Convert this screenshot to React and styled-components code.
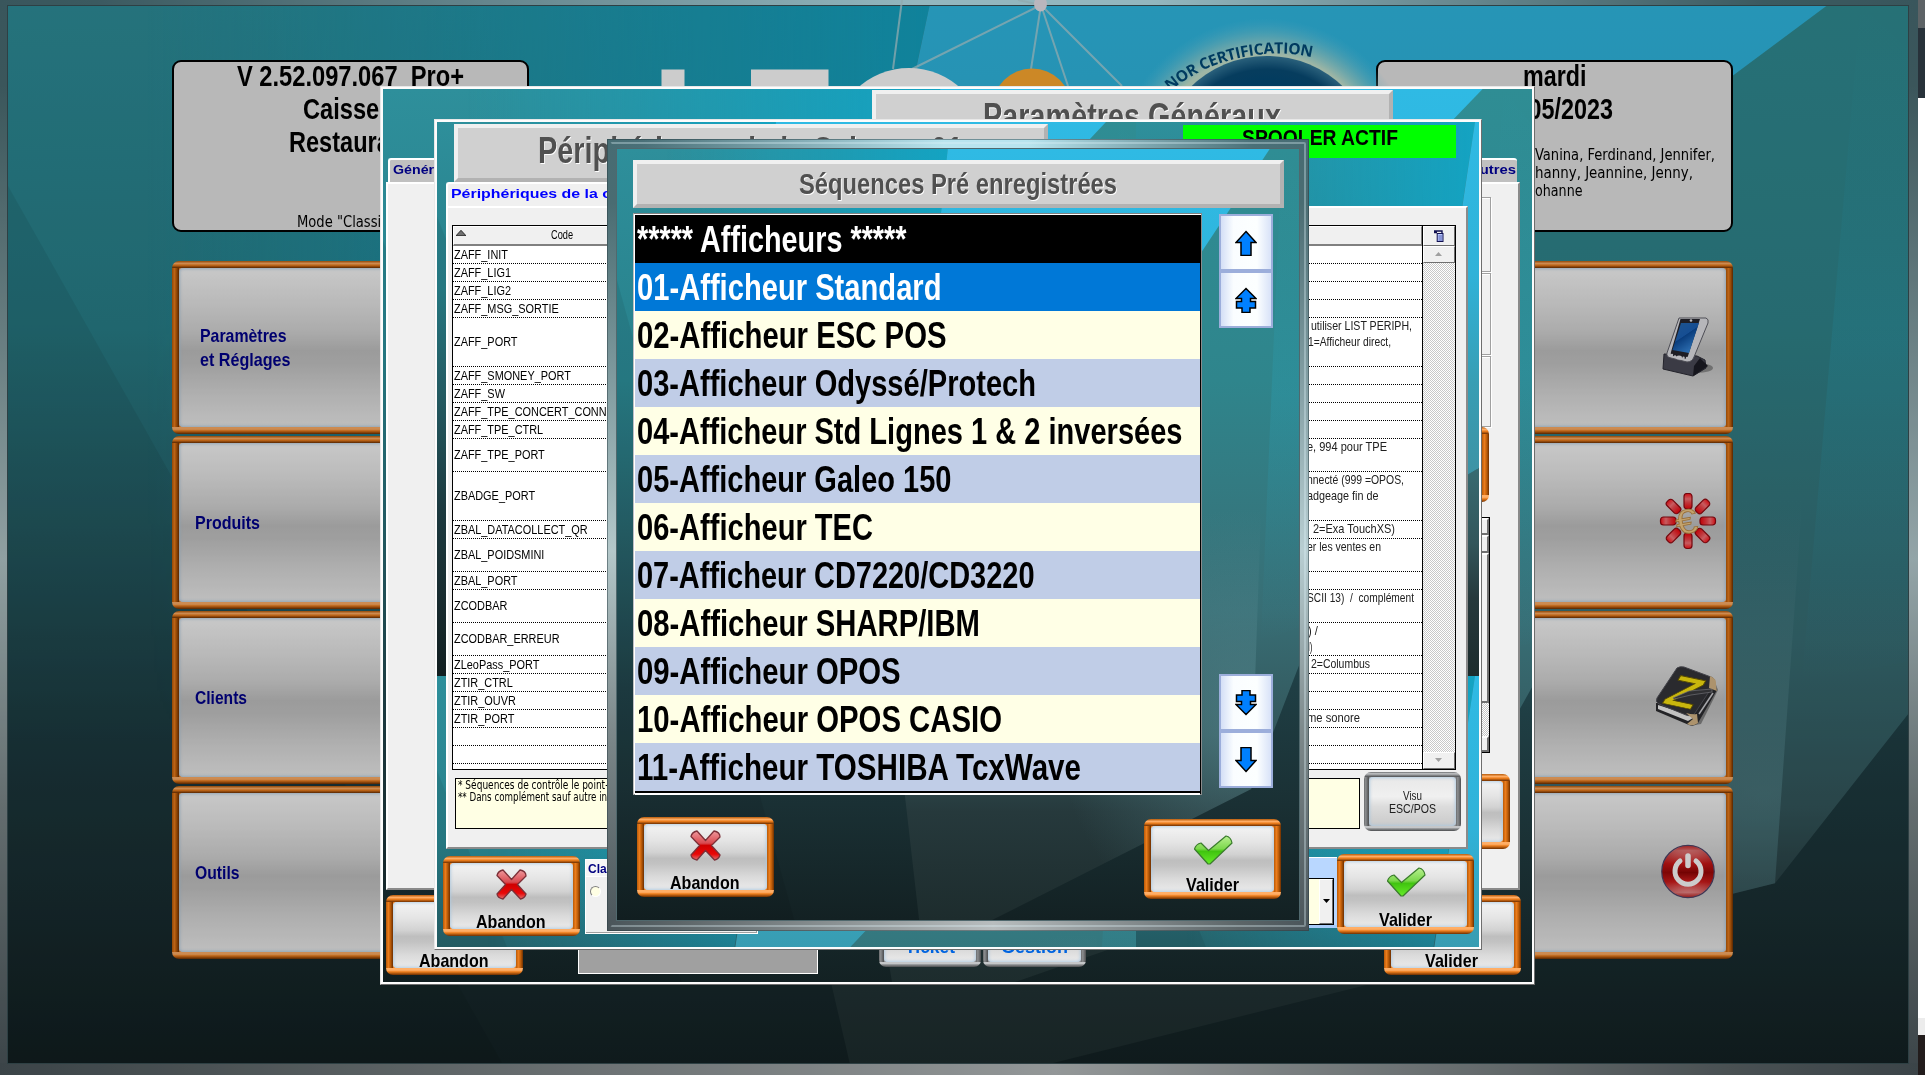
import React, { useId, useLayoutEffect, useRef } from "react";
import styled, { createGlobalStyle, css } from "styled-components";

const Global = createGlobalStyle`
  * { box-sizing: border-box; }
  html, body { margin: 0; padding: 0; overflow: hidden; background: #101c1d; }
  body { font-family: "Liberation Sans", Arial, sans-serif; color: #000; }
`;

/* ---------- condensed text ---------- */

const FitBox = styled.span`
  display: inline-block;
  flex: none;
  white-space: pre;
  vertical-align: top;
  text-align: left;
`;
const FitInner = styled.span`
  display: inline-block;
  transform-origin: 0 50%;
`;

function Fit({ w, k, children }) {
  const box = useRef(null);
  const inner = useRef(null);
  useLayoutEffect(() => {
    inner.current.style.transform = "none";
    const natural = inner.current.getBoundingClientRect().width;
    const ratio = w ? w / natural : k;
    box.current.style.width = `${natural * ratio}px`;
    inner.current.style.transform = `scaleX(${ratio})`;
  });
  return (
    <FitBox ref={box}>
      <FitInner ref={inner}>{children}</FitInner>
    </FitBox>
  );
}

/* ---------- faceted teal wallpaper ---------- */

const Wallpaper = styled.svg`
  display: block;
  width: 100%;
  height: 100%;
`;

function Backdrop() {
  const id = useId().replace(/:/g, "");
  const u = (n) => `url(#${id}${n})`;
  return (
    <Wallpaper viewBox="0 0 1000 1000" preserveAspectRatio="none">
      <defs>
        <linearGradient id={id + "a"} x1="0" y1="0" x2="0" y2="1">
          <stop offset="0" stopColor="#2e8f9b" />
          <stop offset=".3" stopColor="#28808a" />
          <stop offset=".5" stopColor="#266068" />
          <stop offset=".7" stopColor="#1f3e44" />
          <stop offset=".85" stopColor="#1a3034" />
          <stop offset="1" stopColor="#132123" />
        </linearGradient>
        <linearGradient id={id + "b"} x1="0" y1="0" x2="1" y2="0">
          <stop offset=".15" stopColor="#14a3c2" stopOpacity="0" />
          <stop offset="1" stopColor="#14a3c2" />
        </linearGradient>
        <linearGradient id={id + "m"} x1="0" y1="0" x2="0" y2="1">
          <stop offset="0" stopColor="#fff" />
          <stop offset=".4" stopColor="#fff" />
          <stop offset="1" stopColor="#000" />
        </linearGradient>
        <mask id={id + "k"}>
          <rect width="500" height="700" fill={u("m")} />
        </mask>
        <linearGradient id={id + "c"} x1="0" y1="0" x2="0" y2="1">
          <stop offset="0" stopColor="#2fbae4" />
          <stop offset=".4" stopColor="#30b2d8" />
          <stop offset=".68" stopColor="#389eb4" />
          <stop offset="1" stopColor="#3f8fa0" />
        </linearGradient>
        <linearGradient id={id + "d"} x1="0" y1="0" x2="0" y2="1">
          <stop offset="0" stopColor="#2f8d94" />
          <stop offset=".3" stopColor="#2f858c" />
          <stop offset=".6" stopColor="#386e75" />
          <stop offset=".76" stopColor="#33565b" />
          <stop offset=".86" stopColor="#26393c" />
          <stop offset="1" stopColor="#1d2c2d" />
        </linearGradient>
        <linearGradient id={id + "e"} x1="0" y1="0" x2="0" y2="1">
          <stop offset="0" stopColor="#28a6c0" stopOpacity="0" />
          <stop offset=".5" stopColor="#28b0cc" stopOpacity=".2" />
          <stop offset="1" stopColor="#28b0cc" stopOpacity="0" />
        </linearGradient>
        <radialGradient id={id + "f"} gradientUnits="userSpaceOnUse" cx="925" cy="745" r="280">
          <stop offset="0" stopColor="#5c9097" stopOpacity=".5" />
          <stop offset="1" stopColor="#5c9097" stopOpacity="0" />
        </radialGradient>
      </defs>
      <rect width="1000" height="1000" fill={u("a")} />
      <polygon points="0,170 0,1000 260,1000" fill="#000" opacity=".07" />
      <polygon points="0,0 485,0 400,700 0,700" fill={u("b")} mask={u("k")} />
      <polygon points="957,0 1000,0 1000,670 930,830 550,1000 443,1000 403,690 490,625" fill={u("d")} />
      <polygon points="975,0 947,400 930,830 550,1000 443,1000 600,500" fill={u("f")} />
      <polygon points="485,0 957,0 490,625 403,690" fill={u("c")} />
      <polygon points="975,0 1000,40 1000,620 944,640" fill={u("e")} />
    </Wallpaper>
  );
}

/* ---------- framed buttons ---------- */

const tones = {
  orange: ["#b85a08", "#ffae66", "#ec7d1c", "#6e2f00"],
  steel: ["#6a6c6e", "#c4c6c8", "#8c8e90", "#4c4e50"],
};
const strips = ([a, b, c, d], t) => css`
  background:
    linear-gradient(${a}, ${b} 35%, ${c} 62%, ${d}) 0 0 / 100% ${t}px no-repeat,
    linear-gradient(${b}, ${b} 32%, ${c} 55%, ${d}) 0 100% / 100% ${t}px no-repeat,
    linear-gradient(90deg, ${a}, ${c} 35%, ${a} 65%, ${d}) 0 0 / ${t}px 100% no-repeat,
    linear-gradient(90deg, ${a}, ${c} 35%, ${a} 70%, ${d}) 100% 0 / ${t}px 100% no-repeat,
    ${c};
`;
const Frame = styled.div`
  flex: none;
  display: flex;
  width: ${(p) => p.$w}px;
  height: ${(p) => p.$h}px;
  margin: ${(p) => p.$m || 0};
  padding: ${(p) => p.$t || 7}px;
  border-radius: 7px;
  ${(p) => strips(tones[p.$tone || "orange"], p.$t || 7)}
`;
const Face = styled.div`
  flex: 1;
  display: flex;
  flex-direction: column;
  align-items: center;
  border-radius: 4px;
  background: linear-gradient(#f4f4f4, #e4e4e4 25%, #d2d2d2 43%, #bebebe 52%, #c2c2c2 60%, #dadada 80%, #ebebeb);
  box-shadow: inset 0 0 3px 1px rgba(170, 200, 225, 0.85);
`;
const IconSlot = styled.div`
  height: ${(p) => p.$h}px;
  margin-top: ${(p) => p.$top}px;
`;
const ActionLabel = styled.div`
  margin-top: auto;
  margin-bottom: -2.5px;
  padding-right: 1px;
  font-weight: bold;
  font-size: 18.5px;
  line-height: 20px;
`;

function Cross() {
  return (
    <svg width="31" height="31" viewBox="0 0 31 31">
      <defs>
        <linearGradient id="crossRed" x1="0" y1="0" x2="0" y2="1">
          <stop offset="0" stopColor="#f0989c" />
          <stop offset=".42" stopColor="#d84a50" />
          <stop offset=".5" stopColor="#d00000" />
          <stop offset=".8" stopColor="#e80808" />
          <stop offset="1" stopColor="#e07070" />
        </linearGradient>
      </defs>
      <path
        d="M7 1 L15.500 10.500 L24 1 Q30 2 30 7 L21.500 15.500 L30 25 Q29 29 24.500 30 L15.500 20.500 L7 30 Q1.500 29 1 25 L9.500 15.500 L1 6.500 Q2 2 7 1Z"
        fill="url(#crossRed)"
        stroke="#7c3038"
        strokeWidth="1.3"
        strokeLinejoin="round"
      />
    </svg>
  );
}
function Check() {
  return (
    <svg width="40" height="30" viewBox="0 0 40 30">
      <defs>
        <linearGradient id="checkGreen" x1="0" y1="0" x2="0" y2="1">
          <stop offset="0" stopColor="#b8f090" />
          <stop offset=".45" stopColor="#7cd84c" />
          <stop offset=".55" stopColor="#40c410" />
          <stop offset="1" stopColor="#66ec28" />
        </linearGradient>
      </defs>
      <path
        d="M1.500 14 Q3 9 8 8 L15.500 15.500 L33 1 Q38 2 39 8 L17 29 L15 29Z"
        fill="url(#checkGreen)"
        stroke="#3a7c2c"
        strokeWidth="1.2"
        strokeLinejoin="round"
      />
    </svg>
  );
}
function Action({ kind, m, bare, tight }) {
  const yes = kind === "Valider";
  return (
    <Frame $w={137} $h={80.5} $m={m}>
      <Face>
        {!bare && (
          <IconSlot $h={30} $top={yes ? tight || 9 : 6}>
            {yes ? <Check /> : <Cross />}
          </IconSlot>
        )}
        <ActionLabel>
          <Fit w={yes ? 53 : 69.5}>{kind}</Fit>
        </ActionLabel>
      </Face>
    </Frame>
  );
}

/* ---------- main screen ---------- */

const Screen = styled.div`
  position: relative;
  display: flex;
  width: 1925px;
  height: 1075px;
  overflow: hidden;
`;
const metal = (t) => css`
  background:
    linear-gradient(90deg, #476c73, #4a7078 5%, #b8e4ee 48%, #b8e4ee 60%, #4a7078 92%, #476c73) 0 0 / 100% ${t}px no-repeat,
    linear-gradient(90deg, #4a555a, #5c6568 10%, #b8bdbe 55%, #5c6568 90%, #4a555a) 0 100% / 100% ${t}px no-repeat,
    linear-gradient(#476c73, #4a6c72 8%, #b4c8ca 52%, #7c888a 75%, #4a555a) 0 0 / ${t}px 100% no-repeat,
    linear-gradient(#476c73, #4a6c72 8%, #b8ced2 52%, #7c888a 75%, #4a555a) 100% 0 / ${t}px 100% no-repeat;
`;
const Desktop = styled.main`
  position: relative;
  flex: none;
  width: 1918px;
  height: 1075px;
  padding: 6px 10px 12px 8px;
  filter: brightness(0.8);
  ${metal(12)}
`;
const EdgeStrip = styled.aside`
  flex: 1;
  display: grid;
  grid-template-rows: 28px 70px 920px 17px 40px;
`;
const EdgeCell = styled.div`
  background: ${(p) => p.$c};
`;
const DesktopBody = styled.div`
  position: relative;
  width: 1900px;
  height: 1057px;
  padding: 54px 175px 0 164px;
  overflow: hidden;
  box-shadow: 0 0 0 1px #3a5055;
`;
const Under = styled.div`
  position: absolute;
  inset: ${(p) => p.$inset || 0}px;
  overflow: hidden;
`;
const Over = styled.div`
  position: relative;
`;
const InfoRow = styled.header`
  display: flex;
  justify-content: space-between;
  margin-bottom: 29px;
`;
const InfoPanel = styled.section`
  display: flex;
  flex-direction: column;
  align-items: center;
  width: 357px;
  height: 172px;
  border: 2px solid #000;
  border-radius: 9px;
  background: #e6e6e6;
  font-weight: bold;
  font-size: 29px;
`;
const PanelHead = styled.div`
  display: flex;
  flex-direction: column;
  align-items: center;
  margin-top: -2px;
  line-height: 33.2px;
`;
const Mode = styled.div`
  margin-top: auto;
  margin-bottom: -2px;
  width: 100%;
  padding-left: 123px;
  font: 15.5px/19px "DejaVu Sans Condensed", "DejaVu Sans", sans-serif;
`;
const Names = styled.div`
  width: 100%;
  padding: 19.5px 0 0 156.5px;
  font: 15.5px/18px "DejaVu Sans Condensed", "DejaVu Sans", sans-serif;
`;
const Menu = styled.nav`
  display: grid;
  grid-template-columns: 560px 560px;
  justify-content: space-between;
  row-gap: 2.5px;
`;
const MenuFace = styled(Face)`
  flex-direction: row;
  justify-content: ${(p) => (p.$end ? "flex-end" : "flex-start")};
  padding: 0 ${(p) => p.$pr || 0}px 0 ${(p) => p.$pl || 0}px;
  background: linear-gradient(#fafafa, #e8e8e8 22%, #d6d6d6 40%, #c2c2c2 52%, #c6c6c6 60%, #dcdcdc 80%, #eeeeee);
  color: #00008b;
  font-weight: bold;
  font-size: 18.5px;
  line-height: 24px;
`;
const Stack = styled.div`
  display: flex;
  flex-direction: column;
  padding-top: 1px;
`;
const LogoLayer = styled.svg`
  position: absolute;
  left: 0;
  top: 0;
`;

function Logo() {
  return (
    <LogoLayer width="1918" height="120" viewBox="0 0 1918 120">
      <defs>
        <radialGradient id="halo">
          <stop offset=".76" stopColor="#d6e8cc" stopOpacity=".9" />
          <stop offset=".86" stopColor="#a8d8d0" stopOpacity=".55" />
          <stop offset="1" stopColor="#60c8e8" stopOpacity="0" />
        </radialGradient>
        <radialGradient id="seal" cx=".5" cy=".5" r=".5">
          <stop offset=".7" stopColor="#004a78" />
          <stop offset=".88" stopColor="#084c76" />
          <stop offset="1" stopColor="#34789a" />
        </radialGradient>
      </defs>
      <g stroke="#b4d4da" strokeOpacity=".75" strokeWidth="2" fill="none">
        <path d="M902 0L893 69M1041 5L912 69M1041 5L1031 69M1041 5L1068 86M1041 5L1122 86M1018 0L1041 5" />
      </g>
      <ellipse cx="1040.500" cy="4" rx="6.500" ry="7.500" fill="#e8e4ec" />
      <rect x="661.500" y="69.500" width="23" height="30" fill="#fff" />
      <rect x="751" y="69.500" width="77.500" height="30" fill="#fff" />
      <circle cx="909" cy="144" r="76" fill="#fff" />
      <circle cx="1032" cy="108" r="39.500" fill="#ffaa30" />
      <circle cx="1265" cy="168" r="150" fill="url(#halo)" />
      <circle cx="1267" cy="166" r="110" fill="url(#seal)" />
      <path id="sealArc" d="M1160 101 C1188 72 1228 55 1275 53.500 C1290 53 1302 54.500 1326 61" fill="none" />
      <text fontFamily="Open Sans, Noto Sans, sans-serif" fontWeight="700" fontSize="15.500" fill="#004a78">
        <textPath href="#sealArc" startOffset="14" textLength="151">
          NOR CERTIFICATION
        </textPath>
      </text>
    </LogoLayer>
  );
}

function Pda() {
  return (
    <svg width="52" height="62" viewBox="0 0 52 62">
      <defs>
        <linearGradient id="pdaScreen" x1="0" y1="0" x2=".6" y2="1">
          <stop offset="0" stopColor="#2468b0" />
          <stop offset=".5" stopColor="#1c62b8" />
          <stop offset=".52" stopColor="#0c4c9c" />
          <stop offset="1" stopColor="#3a8ce0" />
        </linearGradient>
      </defs>
      <ellipse cx="36" cy="52" rx="16" ry="5" fill="#000" opacity=".3" />
      <path d="M3 38 L2 53 L32 60 L45 52 L44 44 L36 40Z" fill="#4a4a56" stroke="#2c2c36" />
      <path d="M32 60 L33 50 L39 42 L47 50Z" fill="#1c1c24" />
      <path d="M18 2 L45 2 Q48 3 47 7 L33 41 Q31 46 26 46 L10 42 Q5 41 6 37Z" fill="#e4e4e8" stroke="#60606a" />
      <path d="M19.500 3 L39 3 L26 43 L12 40 Q9 39 10 36Z" fill="#26262e" />
      <path d="M20 7 L38 7 L28 37 L11.500 34Z" fill="url(#pdaScreen)" />
      <g fill="#e8e8ee">
        <circle cx="30" cy="4.500" r="1.300" />
        <circle cx="11" cy="39" r="1.200" />
        <circle cx="14" cy="40.500" r="1.200" />
        <ellipse cx="18" cy="41.500" rx="3" ry="2" />
        <circle cx="22.500" cy="41.800" r="1.200" />
        <circle cx="26" cy="42" r="1.200" />
      </g>
    </svg>
  );
}
function EuroBurst() {
  return (
    <svg width="62" height="58" viewBox="-31 -28 62 58">
      <defs>
        <linearGradient id="petal" x1="0" y1="0" x2="0" y2="1">
          <stop offset="0" stopColor="#ff1018" />
          <stop offset=".35" stopColor="#f87478" />
          <stop offset=".55" stopColor="#f04a50" />
          <stop offset="1" stopColor="#f00008" />
        </linearGradient>
      </defs>
      {[0, 45, 90, 135, 180, 225, 270, 315].map((a) => (
        <rect
          key={a}
          x="-4"
          y={a % 90 ? -28.5 : -27.5}
          width="8"
          height={a % 90 ? 16 : 15.5}
          rx="3"
          fill="url(#petal)"
          stroke="#900810"
          strokeWidth="1.2"
          transform={`rotate(${a})`}
        />
      ))}
      <text
        x="-11"
        y="12"
        fontFamily="Liberation Sans, sans-serif"
        fontWeight="400"
        fontSize="34"
        fill="#f4cc88"
        stroke="#c08c48"
        strokeWidth=".8"
        transform="rotate(-10) scale(1.15 1)"
      >
        €
      </text>
    </svg>
  );
}
function ZBook() {
  return (
    <svg width="64" height="62" viewBox="0 0 64 62">
      <path d="M5 42 L40 59 L46 58 L63 24 L60 16 L4 38Z" fill="#000" opacity=".35" />
      <path d="M1 37 L1 45 L34 59 Q39 61 43 57 L62 24 L58 14 L30 38Z" fill="#2c2c30" />
      <path d="M3 39 L3 43 L33 55 L38 52 L34 49Z" fill="#f4f4f4" />
      <path d="M22 2 Q25 0 29 1 L56 11 Q61 13 59 18 L40 47 Q37 51 31 49 L4 38 Q0 36 2 32Z" fill="#34343a" stroke="#54545c" />
      <path d="M55 10 Q62 12 61 20 L62 25 L54 22Z M31 47 Q38 49 42 48 L43 57 Q38 61 32 58 L38 53Z" fill="#d8b888" />
      <text
        x="0"
        y="0"
        fontFamily="Liberation Sans, sans-serif"
        fontWeight="700"
        fontSize="45"
        fill="#fbe410"
        stroke="#6a5a00"
        strokeWidth=".8"
        transform="translate(6 37) rotate(12) skewX(-18) scale(1.15 1)"
      >
        Z
      </text>
      <path d="M18 32 L34 25 L57 23 L57 26 L36 29 L19 33Z" fill="#3c3c40" stroke="#8a8a90" strokeWidth=".7" />
      <path d="M58 27 L44 48" stroke="#d0d0d4" strokeWidth="1.500" />
    </svg>
  );
}
function Power() {
  return (
    <svg width="56" height="56" viewBox="0 0 56 56">
      <defs>
        <linearGradient id="pwr" x1="0" y1="0" x2="0" y2="1">
          <stop offset="0" stopColor="#e04040" />
          <stop offset=".1" stopColor="#f4a8a8" />
          <stop offset=".35" stopColor="#d01818" />
          <stop offset=".52" stopColor="#900404" />
          <stop offset=".7" stopColor="#d82020" />
          <stop offset=".9" stopColor="#ffc0c0" />
          <stop offset="1" stopColor="#c03030" />
        </linearGradient>
        <radialGradient id="pwrSide" cx=".5" cy=".5" r=".6">
          <stop offset=".3" stopColor="#c81010" stopOpacity="0" />
          <stop offset="1" stopColor="#b00c0c" stopOpacity=".6" />
        </radialGradient>
      </defs>
      <circle cx="29" cy="27.500" r="26.200" fill="url(#pwr)" stroke="#504468" strokeWidth="1.300" />
      <circle cx="29" cy="27.500" r="25.500" fill="url(#pwrSide)" />
      <path d="M21 17 A13 13 0 1 0 37 17" fill="none" stroke="#fff" strokeWidth="5" strokeLinecap="round" />
      <path d="M29 12 V21.500" stroke="#fff" strokeWidth="5.500" strokeLinecap="round" />
    </svg>
  );
}

const menu = [
  { lines: [["Paramètres", 86.5], ["et Réglages", 90.5]], pl: 20.5, icon: <Pda />, pr: 13 },
  { lines: [["Produits", 65]], pl: 15.5, icon: <EuroBurst />, pr: 7 },
  { lines: [["Clients", 52]], pl: 15.5, icon: <ZBook />, pr: 7 },
  { lines: [["Outils", 44.5]], pl: 15.5, icon: <Power />, pr: 11 },
];

const IconNudge = styled.div`
  display: flex;
  padding-bottom: 1px;
`;

function MainScreen() {
  return (
    <Desktop>
      <DesktopBody>
        <Under>
          <Backdrop />
        </Under>
        <Over>
          <InfoRow>
            <InfoPanel>
              <PanelHead>
                <Fit w={227}>{"V 2.52.097.067  Pro+"}</Fit>
                <Fit w={96}>Caisse 1</Fit>
                <Fit w={123}>Restaurant</Fit>
              </PanelHead>
              <Mode>
                <Fit w={115}>Mode "Classique"</Fit>
              </Mode>
            </InfoPanel>
            <InfoPanel>
              <PanelHead>
                <Fit w={63.5}>mardi</Fit>
                <Fit w={117}>16/05/2023</Fit>
              </PanelHead>
              <Names>
                <Fit w={180}>Vanina, Ferdinand, Jennifer,</Fit>
                <br />
                <Fit w={158}>hanny, Jeannine, Jenny,</Fit>
                <br />
                <Fit w={47.5}>ohanne</Fit>
              </Names>
            </InfoPanel>
          </InfoRow>
          <Menu>
            {menu.map((m) => (
              <React.Fragment key={m.lines[0][0]}>
                <Frame $w={560} $h={172.5}>
                  <MenuFace $pl={m.pl}>
                    <Stack>
                      {m.lines.map(([t, w]) => (
                        <Fit key={t} w={w}>
                          {t}
                        </Fit>
                      ))}
                    </Stack>
                  </MenuFace>
                </Frame>
                <Frame $w={560} $h={172.5}>
                  <MenuFace $end $pr={m.pr}>
                    <IconNudge>{m.icon}</IconNudge>
                  </MenuFace>
                </Frame>
              </React.Fragment>
            ))}
          </Menu>
        </Over>
      </DesktopBody>
      <Logo />
    </Desktop>
  );
}

/* ---------- windows ---------- */

const Win = styled.section`
  position: absolute;
  left: ${(p) => p.$x}px;
  top: ${(p) => p.$y}px;
  width: ${(p) => p.$w}px;
  height: ${(p) => p.$h}px;
  padding: 2px;
  overflow: hidden;
  border: 1px solid;
  border-color: #e8e8e8 #6e6e6e #6e6e6e #e8e8e8;
  background: #fcfcfc;
`;
const WinBody = styled.div`
  position: relative;
  display: flex;
  flex-direction: column;
  height: 100%;
`;
const Title = styled.h1`
  flex: none;
  display: flex;
  align-items: center;
  justify-content: center;
  width: ${(p) => p.$w}px;
  height: ${(p) => p.$h}px;
  margin: ${(p) => p.$m};
  border: 4px solid;
  border-color: #f0f0f0 #b2b2b2 #b2b2b2 #f0f0f0;
  background: #d0d0d0;
  color: #505050;
  font-size: ${(p) => p.$f}px;
  line-height: ${(p) => p.$f}px;
  padding: 0 1px ${(p) => p.$pb || 0}px 0;
  text-shadow: 1px 1px 0 #fff;
`;
const Page = styled.div`
  flex: none;
  width: ${(p) => p.$w}px;
  height: ${(p) => p.$h}px;
  margin-left: ${(p) => p.$ml}px;
  border: 2px solid;
  border-color: #fff #8a8a8a #8a8a8a #fff;
  background: #f0f0f0;
`;
const Tab = styled.div`
  height: 24px;
  padding: ${(p) => p.$p || "0 1px 0 3px"};
  border-top: 2px solid #fff;
  border-left: 2px solid #fff;
  border-radius: 3px 3px 0 0;
  background: ${(p) => p.$bg || "#c0c0c0"};
  color: ${(p) => p.$c || "#000080"};
  font-weight: bold;
  font-size: 13.5px;
  line-height: 20px;
`;

/* general settings window */

const TabRow = styled.div`
  display: flex;
  justify-content: space-between;
  width: 1129px;
  margin: 1px 0 0 5px;
`;
const SideColumn = styled.div`
  display: flex;
  flex-direction: column;
  align-items: flex-end;
  padding-right: 8px;
`;
const GroupBox = styled.div`
  width: 200px;
  height: ${(p) => p.$h}px;
  margin: ${(p) => p.$m || "0 19px 0 0"};
  border: 1px solid #a0a0a0;
  box-shadow: inset 1px 1px 0 #fff, 1px 1px 0 #fff;
`;
const SideList = styled.div`
  display: flex;
  flex-direction: column;
  align-items: flex-end;
  width: 200px;
  height: 236px;
  margin: 15px 20px 21px 0;
  border: 1.5px solid #000;
  background: #fff;
`;
const ListKnob = styled.div`
  width: 22px;
  height: ${(p) => p.$h}px;
  flex: ${(p) => (p.$grow ? 1 : "none")};
  border: 2px solid;
  border-color: #fff #707070 #707070 #fff;
  background: ${(p) => (p.$grow ? "repeating-conic-gradient(#c4c4c4 0 25%, #fff 0 50%) 0 0 / 2px 2px" : "#f0f0f0")};
  ${(p) => p.$grow && "border: none;"}
`;
const Footer = styled.div`
  display: flex;
  align-items: flex-start;
  flex: 1;
`;
const GreySlab = styled.div`
  width: 239.5px;
  height: 60px;
  margin: 23.5px 0 0 55px;
  border: 1px solid #fff;
  background: #a0a0a0;
`;
const SteelFace = styled(Face)`
  justify-content: flex-end;
  color: #0064e0;
  font-weight: bold;
  font-size: 18px;
  line-height: 20px;
  padding-bottom: 5px;
`;

function SettingsWindow() {
  return (
    <Win $x={380} $y={85.5} $w={1155} $h={899}>
      <Under $inset={2}>
        <Backdrop />
      </Under>
      <WinBody>
        <Title $w={521} $h={67} $m="1.500px 0 0 489px" $f={36} $pb={14}>
          <Fit w={298}>Paramètres Généraux</Fit>
        </Title>
        <TabRow>
          <Tab>
            <Fit w={53}>Général</Fit>
          </Tab>
          <Tab>
            <Fit w={47}>Autres</Fit>
          </Tab>
        </TabRow>
        <Page $w={1134} $h={708} $ml={3}>
          <SideColumn>
            <GroupBox $h={75} $m="13px 19px 0 0" />
            <GroupBox $h={82} $m="1px 19px 0 0" />
            <GroupBox $h={71} $m="1px 19px 0 0" />
            <Frame $w={137} $h={75} $m="0 21px 0 0">
              <Face />
            </Frame>
            <SideList>
              <ListKnob $h={17} />
              <ListKnob $h={18} />
              <ListKnob $h={150} />
              <ListKnob $grow />
              <ListKnob $h={16} />
            </SideList>
            <Frame $w={137} $h={75}>
              <Face />
            </Frame>
          </SideColumn>
        </Page>
        <Footer>
          <Action kind="Abandon" m="4.500px 0 0 3px" bare />
          <GreySlab />
          <Frame $w={102} $h={70} $t={5} $tone="steel" $m="7px 0 0 61px">
            <SteelFace>
              <Fit w={50}>Ticket</Fit>
            </SteelFace>
          </Frame>
          <Frame $w={103} $h={70} $t={5} $tone="steel" $m="7px 0 0 2px">
            <SteelFace>
              <Fit w={67}>Gestion</Fit>
            </SteelFace>
          </Frame>
          <Action kind="Valider" m="4.500px 0 0 298px" bare />
        </Footer>
      </WinBody>
    </Win>
  );
}

/* peripherals window */

const TileGrid = styled.div`
  display: grid;
  grid-template: 554px 554px / 699px 699px;
`;
const HeadRow = styled.div`
  display: flex;
  height: 59.5px;
`;
const Spooler = styled.div`
  display: flex;
  justify-content: center;
  width: 273px;
  height: 33px;
  margin: 3px 0 0 135px;
  background: #0f0;
  font-weight: bold;
  font-size: 22.5px;
  line-height: 26px;
`;
const TabHolder = styled.div`
  width: 500px;
  margin-left: 9px;
`;
const Table = styled.div`
  display: grid;
  grid-template-columns: 969.5px 1fr;
  width: 1004px;
  height: 545px;
  margin: 17px 0 0 4px;
  border: 1.5px solid #000;
  background: #fff;
`;
const TableHead = styled.div`
  display: flex;
  align-items: center;
  height: 20px;
  padding: 0 0 0 4px;
  border: 1px solid;
  border-color: #fff #808080 #808080 #fff;
  border-bottom-width: 2px;
  background: #f0f0f0;
  font-size: 12.5px;
`;
const SortMark = styled.svg`
  margin: -4px 85px 0 -2px;
`;
const TableMain = styled.div`
  overflow: hidden;
  border-right: 1.5px solid #000;
`;
const TRow = styled.div`
  display: grid;
  grid-template-columns: 853px 1fr;
  align-items: center;
  height: ${(p) => p.$h}px;
  padding-left: 1px;
  border-bottom: 1px dotted #000;
  font-size: 13.6px;
`;
const Comment = styled.div`
  align-self: start;
  display: flex;
  flex-direction: column;
  padding: 0 0 0 ${(p) => p.$x}px;
  line-height: 16px;
  color: #202020;
`;
const TableScroll = styled.div`
  display: flex;
  flex-direction: column;
  background: repeating-conic-gradient(#c8c8c8 0 25%, #fff 0 50%) 0 0 / 2px 2px;
`;
const Knob = styled.div`
  display: flex;
  align-items: center;
  justify-content: center;
  height: ${(p) => p.$h}px;
  margin-top: ${(p) => (p.$last ? "auto" : 0)};
  border: 1.5px solid;
  border-color: #fff #6e6e6e #6e6e6e #fff;
  background: #f0f0f0;
`;
const NoteRow = styled.div`
  display: flex;
  align-items: flex-start;
  padding: 2px 0 0 7px;
`;
const Note = styled.div`
  display: flex;
  flex-direction: column;
  width: 905px;
  height: 51px;
  margin-top: 6px;
  padding: 0 0 0 2px;
  border: 1.5px solid #000;
  background: #ffffe4;
  font: 11.5px/12px "DejaVu Sans Condensed", "DejaVu Sans", sans-serif;
`;
const VisuFace = styled(Face)`
  justify-content: center;
  background: linear-gradient(#e8e8e8, #f0f0f0 40%, #dcdcdc 60%, #cacaca);
  padding-top: 1px;
  font-size: 13px;
  line-height: 13px;
  color: #202020;
`;
const KeyPanel = styled.div`
  width: 173px;
  height: 75px;
  margin: 10px 0 0 4.5px;
  border: 1.5px solid #fff;
  box-shadow: inset -1px -1px 0 #a0a0a0;
  background: #f0f0f0;
`;
const KeyLegend = styled.div`
  height: 17px;
  padding-left: 2px;
  border-bottom: 1px solid #fff;
  background: #f6f6f6;
  color: #000080;
  font-weight: bold;
  font-size: 13.5px;
  line-height: 17px;
`;
const Radio = styled.div`
  width: 11px;
  height: 11px;
  margin: 9px 0 0 4px;
  border: 1.5px solid;
  border-color: #808080 #fff #fff #808080;
  border-radius: 50%;
  background: #ffffe4;
`;
const ComboPanel = styled.div`
  width: 220px;
  height: 70.5px;
  margin: 8px 0 0 auto;
  padding: 19.5px 3px 0 0;
  border-top: 1px solid #fff;
  border-bottom: 3px solid #a8ccfa;
  background: #b9d7ff;
`;
const Combo = styled.div`
  display: flex;
  justify-content: flex-end;
  height: 47px;
  border: 1.5px solid #000;
  background: #ffffe4;
`;
const ComboKnob = styled(Knob)`
  width: 14px;
  height: 100%;
`;
const Spacer = styled.div`
  flex: 1;
`;

const rows = [
  ["ZAFF_INIT", 18],
  ["ZAFF_LIG1", 18],
  ["ZAFF_LIG2", 18],
  ["ZAFF_MSG_SORTIE", 18],
  ["ZAFF_PORT", 49, 1, [[" utiliser LIST PERIPH,", 104], ["1=Afficheur direct,", 83]]],
  ["ZAFF_SMONEY_PORT", 18],
  ["ZAFF_SW", 18],
  ["ZAFF_TPE_CONCERT_CONN", 18],
  ["ZAFF_TPE_CTRL", 18],
  ["ZAFF_TPE_PORT", 33, 0, [["e, 994 pour TPE", 80]]],
  ["ZBADGE_PORT", 49, 0, [["nnecté (999 =OPOS,", 97], ["adgeage fin de", 71.5]]],
  ["ZBAL_DATACOLLECT_QR", 18, 6, [["2=Exa TouchXS)", 82]]],
  ["ZBAL_POIDSMINI", 33, 0, [["er les ventes en", 74]]],
  ["ZBAL_PORT", 18],
  ["ZCODBAR", 33, 0, [["SCII 13)  /  complément", 107]]],
  ["ZCODBAR_ERREUR", 33, 1, [[") /", 10], ["l)", 4.5]]],
  ["ZLeoPass_PORT", 18, 4, [["2=Columbus", 59]]],
  ["ZTIR_CTRL", 18],
  ["ZTIR_OUVR", 18],
  ["ZTIR_PORT", 18, 0, [["me sonore", 53]]],
  ["", 18],
  ["", 18],
];

function PeripheralsWindow() {
  return (
    <Win $x={434} $y={119} $w={1048} $h={830.5}>
      <Under $inset={2}>
        <TileGrid>
          <Backdrop />
          <Backdrop />
          <Backdrop />
          <Backdrop />
        </TileGrid>
      </Under>
      <WinBody>
        <HeadRow>
          <Title $w={594} $h={57.5} $m="2px 0 0 17px" $f={36} $pb={4}>
            <Fit w={425}>Périphériques de la Caisse : 01</Fit>
          </Title>
          <Spooler>
            <Fit w={156}>SPOOLER ACTIF</Fit>
          </Spooler>
        </HeadRow>
        <TabHolder>
          <Tab $bg="#f0f0f0" $c="#0000ff" $p="0 0 0 3px">
            <Fit w={200}>Périphériques de la caisse</Fit>
          </Tab>
        </TabHolder>
        <Page $w={1022} $h={643.5} $ml={9}>
          <Table>
            <TableMain>
              <TableHead>
                <SortMark width="10" height="6" viewBox="0 0 11 6">
                  <path d="M0 6L5.500 0L11 6Z" fill="#707070" stroke="#000" strokeWidth=".8" />
                </SortMark>
                <Fit w={22}>Code</Fit>
              </TableHead>
              {rows.map(([code, h, x, lines], i) => (
                <TRow key={i} $h={h}>
                  <div>
                    <Fit k={0.803}>{code}</Fit>
                  </div>
                  {lines && (
                    <Comment $x={x}>
                      {lines.map(([t, w]) => (
                        <Fit key={t} w={w}>
                          {t}
                        </Fit>
                      ))}
                    </Comment>
                  )}
                </TRow>
              ))}
            </TableMain>
            <TableScroll>
              <Knob $h={20}>
                <svg width="10" height="12" viewBox="0 0 10 12">
                  <path d="M0 1H8V3M0 2.500H3" fill="none" stroke="#101050" strokeWidth="1.400" />
                  <rect x="3.200" y="3.500" width="5.800" height="8" fill="#b8c8ff" stroke="#101050" />
                  <path d="M4.500 6H8M4.500 8H8M4.500 10H8" stroke="#4048a0" strokeWidth=".8" />
                </svg>
              </Knob>
              <Knob $h={17}>
                <svg width="7" height="4" viewBox="0 0 7 4">
                  <path d="M0 4L3.500 0L7 4Z" fill="#a0a0a0" />
                </svg>
              </Knob>
              <Knob $h={17} $last>
                <svg width="7" height="4" viewBox="0 0 7 4">
                  <path d="M0 0L3.500 4L7 0Z" fill="#a0a0a0" />
                </svg>
              </Knob>
            </TableScroll>
          </Table>
          <NoteRow>
            <Note>
              <Fit w={181}>* Séquences de contrôle le point-virgule</Fit>
              <Fit w={184}>** Dans complément sauf autre indication</Fit>
            </Note>
            <Frame $w={97} $h={59.5} $t={5} $tone="steel" $m="0 0 0 4px">
              <VisuFace>
                <Fit w={19}>Visu</Fit>
                <Fit w={47}>ESC/POS</Fit>
              </VisuFace>
            </Frame>
          </NoteRow>
        </Page>
        <Footer>
          <Action kind="Abandon" m="6.500px 0 0 6px" />
          <KeyPanel>
            <KeyLegend>
              <Fit w={40}>Clavier</Fit>
            </KeyLegend>
            <Radio />
          </KeyPanel>
          <Spacer />
          <ComboPanel>
            <Combo>
              <ComboKnob>
                <svg width="7" height="4" viewBox="0 0 7 4">
                  <path d="M0 0L3.500 4L7 0Z" fill="#000" />
                </svg>
              </ComboKnob>
            </Combo>
          </ComboPanel>
          <Action kind="Valider" m="4.500px 5px 0 0" tight={6} />
        </Footer>
      </WinBody>
    </Win>
  );
}

/* sequence picker */

const Dialog = styled.section`
  position: absolute;
  left: 607px;
  top: 139px;
  width: 702px;
  height: 792px;
  padding: 10px 10px 11px 10px;
  box-shadow: inset 0 0 0 1px rgba(40, 60, 66, 0.5);
  ${metal(11)}
`;
const DialogSheen = styled.div`
  position: absolute;
  inset: 3px 3px 4px;
  border: 2px solid rgba(220, 240, 245, 0.35);
  border-left-color: transparent;
  border-radius: 2px;
  filter: blur(0.6px);
`;
const DialogBody = styled.div`
  position: relative;
  height: 100%;
  overflow: hidden;
  box-shadow: 0 0 0 1px #50686d;
`;
const PickTitle = styled.div`
  padding: 11px 0 0 16px;
`;
const PickRow = styled.div`
  display: flex;
  gap: 17px;
  padding: 4.5px 0 0 16px;
`;
const List = styled.div`
  width: 569px;
  height: 582px;
  padding: 1px 1px 0 1px;
  border: 1px solid;
  border-color: #808080 #8a8a8a #8a8a8a #c0c0c0;
  box-shadow: inset 1px 1px 0 #fff;
  background: #000;
`;
const Item = styled.div`
  height: 48px;
  padding: 0 0 0 1.5px;
  background: ${(p) => p.$bg};
  color: ${(p) => (p.$light ? "#fff" : "#000")};
  font-weight: bold;
  font-size: 36px;
  line-height: 49.5px;
`;
const ListEnd = styled.div`
  height: 2.5px;
  margin-top: 2px;
  background: #fff;
`;
const Movers = styled.div`
  display: flex;
  flex-direction: column;
  justify-content: space-between;
  height: 574px;
  margin-top: 1.5px;
`;
const MoverPair = styled.div`
  display: flex;
  flex-direction: column;
`;
const Mover = styled.div`
  display: flex;
  align-items: center;
  justify-content: center;
  width: 54px;
  height: 57px;
  border: 2px solid #9caedb;
  background: linear-gradient(90deg, #d4dff6, #fafdff 25%, #fcffff 72%, #d8e2f8);
`;
const DialogFooter = styled.div`
  display: flex;
  justify-content: space-between;
  padding: 22px 18px 0 20px;
`;

const arrowSingle = "M11 1L21 12H16V25H6V12H1Z";
const arrowDouble = "M11 1L21 11H15.500V14H20.500V20.500H15V25H7V20.500H1.500V14H6.500V11H1Z";

function Arrow({ d, down }) {
  return (
    <svg width="22" height="26" viewBox="0 0 22 26">
      <path
        d={d}
        fill="#0080ff"
        stroke="#000"
        strokeWidth="1.500"
        transform={down ? "matrix(1 0 0 -1 0 25.5)" : "translate(0 .5)"}
      />
    </svg>
  );
}

const items = [
  ["***** Afficheurs *****", 269.5],
  ["01-Afficheur Standard", 304.5],
  ["02-Afficheur ESC POS", 309.5],
  ["03-Afficheur Odyssé/Protech", 399],
  ["04-Afficheur Std Lignes 1 & 2 inversées", 545.5],
  ["05-Afficheur Galeo 150", 314.5],
  ["06-Afficheur TEC", 236],
  ["07-Afficheur CD7220/CD3220", 397.5],
  ["08-Afficheur SHARP/IBM", 343],
  ["09-Afficheur OPOS", 263.5],
  ["10-Afficheur OPOS CASIO", 365],
  ["11-Afficheur TOSHIBA TcxWave", 444],
];
const itemBg = (i) => (i === 0 ? "#000" : i === 1 ? "#0078d7" : i % 2 ? "#c0cde7" : "#ffffe6");

function SequenceDialog() {
  return (
    <Dialog>
      <DialogSheen />
      <DialogBody>
        <Under>
          <Backdrop />
        </Under>
        <Over>
          <PickTitle>
            <Title $w={651} $h={48} $m="0" $f={29.5} $pb={1}>
              <Fit w={318}>Séquences Pré enregistrées</Fit>
            </Title>
          </PickTitle>
          <PickRow>
            <List>
              {items.map(([t, w], i) => (
                <Item key={t} $bg={itemBg(i)} $light={i < 2}>
                  <Fit w={w}>{t}</Fit>
                </Item>
              ))}
              <ListEnd />
            </List>
            <Movers>
              <MoverPair>
                <Mover>
                  <Arrow d={arrowSingle} />
                </Mover>
                <Mover>
                  <Arrow d={arrowDouble} />
                </Mover>
              </MoverPair>
              <MoverPair>
                <Mover>
                  <Arrow d={arrowDouble} down />
                </Mover>
                <Mover>
                  <Arrow d={arrowSingle} down />
                </Mover>
              </MoverPair>
            </Movers>
          </PickRow>
          <DialogFooter>
            <Action kind="Abandon" />
            <Action kind="Valider" m="2px 0 0 0" />
          </DialogFooter>
        </Over>
      </DialogBody>
    </Dialog>
  );
}

export default function App() {
  return (
    <>
      <Global />
      <Screen>
        <MainScreen />
        <EdgeStrip>
          <EdgeCell $c="#5d6366" />
          <EdgeCell $c="#28323a" />
          <EdgeCell $c="#ffffff" />
          <EdgeCell $c="#ececec" />
          <EdgeCell $c="#221c1c" />
        </EdgeStrip>
        <SettingsWindow />
        <PeripheralsWindow />
        <SequenceDialog />
      </Screen>
    </>
  );
}
